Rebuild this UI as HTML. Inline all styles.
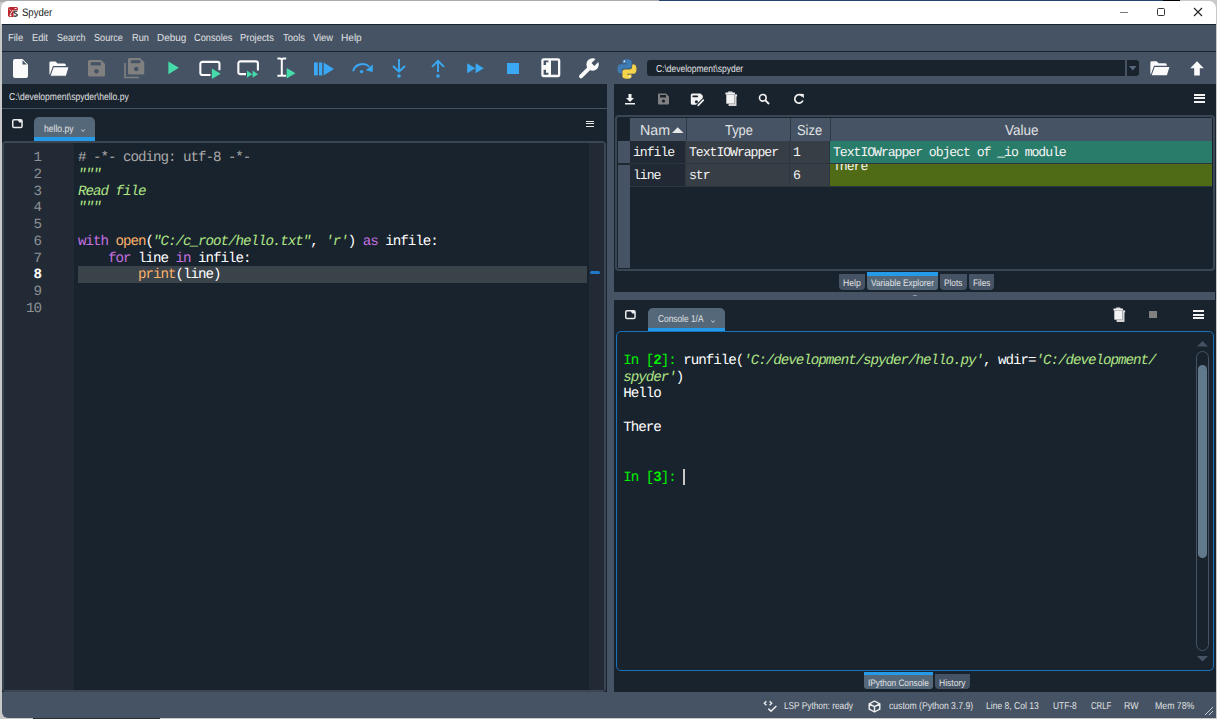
<!DOCTYPE html>
<html><head><meta charset="utf-8"><style>
html,body{margin:0;padding:0;}
body{width:1217px;height:719px;position:relative;overflow:hidden;background:#c9c9c9;font-family:"Liberation Sans",sans-serif;text-rendering:geometricPrecision;}
.a{position:absolute;}
.t{position:absolute;white-space:pre;}
svg{overflow:visible;}
</style></head><body>
<div class="a" style="left:0px;top:0px;width:1217px;height:719px;background:#c9c9c9;"></div>
<div class="a" style="left:0px;top:0px;width:659px;height:1.5px;background:#ababab;"></div>
<div class="a" style="left:659px;top:0px;width:504px;height:1.5px;background:#27446f;"></div>
<div class="a" style="left:1163px;top:0px;width:17px;height:1.5px;background:#000;"></div>
<div class="a" style="left:1px;top:1px;width:1215px;height:23px;background:#ffffff;border-radius:7px 7px 0 0;"></div>
<svg class="a" style="left:8.2px;top:6.6px;" width="10.2" height="10.2" viewBox="0 0 10.2 10.2"><rect x="0" y="0" width="10" height="10" rx="1.8" fill="#b8262c"/><path d="M5.6 3.2H10V10H5.6z" fill="#fff"/><path d="M2.2 7.5L4.8 3.2M1.4 2.5L2.8 3.6M6.5 1.6H8.6" stroke="#fff" stroke-width="0.9"/><circle cx="2.6" cy="8.4" r="0.9" fill="#fff"/><path d="M9.2 4.6C8.7 4 6 3.7 6 5.2C6 6.6 9.3 6.4 9.3 8.1C9.3 9.6 6.6 9.4 5.9 8.8" stroke="#333" stroke-width="1.3" fill="none"/></svg>
<div class="t" style="left:21.57px;top:8.0px;font-family:'Liberation Sans', sans-serif;font-size:10.9px;line-height:10.9px;color:#1a1a1a;transform:scaleX(0.8775);transform-origin:0 0;">Spyder</div>
<div class="a" style="left:1120px;top:11.5px;width:8px;height:1px;background:#7a7a7a;"></div>
<div class="a" style="left:1156.5px;top:8px;width:8px;height:8px;border:1px solid #333;border-radius:1.5px;box-sizing:border-box;"></div>
<svg class="a" style="left:1193px;top:7px;" width="10" height="10" viewBox="0 0 10 10"><path d="M1 1L9 9M9 1L1 9" stroke="#222" stroke-width="1.1"/></svg>
<div class="a" style="left:1.5px;top:24px;width:1214.2px;height:28px;background:#19232d;"></div>
<div class="a" style="left:1.5px;top:25px;width:1214.2px;height:25.5px;background:#455364;"></div>
<div class="t" style="left:8.35px;top:34.0px;font-family:'Liberation Sans', sans-serif;font-size:10.3px;line-height:10.3px;color:#e0e1e3;transform:scaleX(0.9153);transform-origin:0 0;">File</div>
<div class="t" style="left:31.76px;top:34.0px;font-family:'Liberation Sans', sans-serif;font-size:10.3px;line-height:10.3px;color:#e0e1e3;transform:scaleX(0.8966);transform-origin:0 0;">Edit</div>
<div class="t" style="left:57.09px;top:34.0px;font-family:'Liberation Sans', sans-serif;font-size:10.3px;line-height:10.3px;color:#e0e1e3;transform:scaleX(0.8771);transform-origin:0 0;">Search</div>
<div class="t" style="left:94.09px;top:34.0px;font-family:'Liberation Sans', sans-serif;font-size:10.3px;line-height:10.3px;color:#e0e1e3;transform:scaleX(0.8872);transform-origin:0 0;">Source</div>
<div class="t" style="left:131.66px;top:34.0px;font-family:'Liberation Sans', sans-serif;font-size:10.3px;line-height:10.3px;color:#e0e1e3;transform:scaleX(0.8962);transform-origin:0 0;">Run</div>
<div class="t" style="left:156.91px;top:34.0px;font-family:'Liberation Sans', sans-serif;font-size:10.3px;line-height:10.3px;color:#e0e1e3;transform:scaleX(0.9639);transform-origin:0 0;">Debug</div>
<div class="t" style="left:193.64px;top:34.0px;font-family:'Liberation Sans', sans-serif;font-size:10.3px;line-height:10.3px;color:#e0e1e3;transform:scaleX(0.8960);transform-origin:0 0;">Consoles</div>
<div class="t" style="left:240.15px;top:34.0px;font-family:'Liberation Sans', sans-serif;font-size:10.3px;line-height:10.3px;color:#e0e1e3;transform:scaleX(0.9111);transform-origin:0 0;">Projects</div>
<div class="t" style="left:282.81px;top:34.0px;font-family:'Liberation Sans', sans-serif;font-size:10.3px;line-height:10.3px;color:#e0e1e3;transform:scaleX(0.9113);transform-origin:0 0;">Tools</div>
<div class="t" style="left:312.95px;top:34.0px;font-family:'Liberation Sans', sans-serif;font-size:10.3px;line-height:10.3px;color:#e0e1e3;transform:scaleX(0.9052);transform-origin:0 0;">View</div>
<div class="t" style="left:341.09px;top:34.0px;font-family:'Liberation Sans', sans-serif;font-size:10.3px;line-height:10.3px;color:#e0e1e3;transform:scaleX(0.9784);transform-origin:0 0;">Help</div>
<div class="a" style="left:1.5px;top:52px;width:1214.2px;height:32px;background:#455364;"></div>
<div class="a" style="left:1.5px;top:84px;width:1214.2px;height:608px;background:#19232d;"></div>
<div class="a" style="left:1.5px;top:691.5px;width:1214.2px;height:26px;background:#455364;border-radius:0 0 0 6px;"></div>
<div class="a" style="left:33px;top:717.6px;width:127px;height:1.4px;background:#2a2f36;"></div>
<div class="t" style="left:9.07px;top:93.0px;font-family:'Liberation Sans', sans-serif;font-size:10.2px;line-height:10.2px;color:#e0e1e3;transform:scaleX(0.8385);transform-origin:0 0;">C:\development\spyder\hello.py</div>
<div class="a" style="left:2px;top:108px;width:605px;height:1px;background:#455364;"></div>
<svg class="a" style="left:11.9px;top:119px;" width="10.8" height="9.2" viewBox="0 0 10.8 9.2"><rect x="0.75" y="0.75" width="9.3" height="7.7" rx="1.3" stroke="#ececec" stroke-width="1.5" fill="none"/><path d="M5.8 0.9H10V3.4H7.1z" fill="#ececec"/></svg>
<div class="a" style="left:34px;top:117px;width:61px;height:20px;background:#54687a;border-radius:5px 5px 0 0;"></div>
<div class="a" style="left:34px;top:137px;width:61px;height:3.6px;background:#259ae9;"></div>
<div class="t" style="left:44.40px;top:125.0px;font-family:'Liberation Sans', sans-serif;font-size:10.2px;line-height:10.2px;color:#e0e1e3;transform:scaleX(0.8424);transform-origin:0 0;">hello.py</div>
<svg class="a" style="left:81.3px;top:128.8px;" width="4" height="3" viewBox="0 0 4 3"><path d="M0.4 0.4L2 2.5L3.6 0.4" stroke="#d0d3d6" stroke-width="0.9" fill="none"/></svg>
<div class="a" style="left:585.5px;top:120.5px;width:8.5px;height:1.4px;background:#e6e6e6;"></div>
<div class="a" style="left:585.5px;top:123.0px;width:8.5px;height:1.4px;background:#e6e6e6;"></div>
<div class="a" style="left:585.5px;top:125.5px;width:8.5px;height:1.4px;background:#e6e6e6;"></div>
<div class="a" style="left:2px;top:140.5px;width:603.5px;height:551px;border:2px solid #3b4654;border-radius:4px;box-sizing:border-box;background:#19232d;"></div>
<div class="a" style="left:4px;top:142.5px;width:70px;height:547px;background:#222b35;"></div>
<div class="a" style="left:588.5px;top:142.5px;width:15px;height:547px;background:#222b35;"></div>
<div class="a" style="left:78px;top:266px;width:508.7px;height:16.7px;background:#3a424a;"></div>
<div class="a" style="left:590.2px;top:270.7px;width:9.8px;height:3.1px;background:#1f78c8;border-radius:1.5px;"></div>
<div class="a" style="left:607px;top:84px;width:7px;height:608px;background:#455364;"></div>
<div class="t" style="left:78px;top:151.0px;font-family:'Liberation Mono', monospace;font-size:14.2px;line-height:14.2px;color:#ffffff;letter-spacing:-1.0199999999999996px;white-space:pre;"><span style="color:#a9a9a9;"># -*- coding: utf-8 -*-</span></div>
<div class="t" style="top:151.0px;right:1176px;text-align:right;font-family:'Liberation Mono', monospace;font-size:14.2px;line-height:14.2px;color:#8d9196;letter-spacing:-1.0199999999999996px;white-space:pre;">1</div>
<div class="t" style="left:78px;top:168.0px;font-family:'Liberation Mono', monospace;font-size:14.2px;line-height:14.2px;color:#ffffff;letter-spacing:-1.0199999999999996px;white-space:pre;"><span style="color:#b0e686;font-style:italic;">"""</span></div>
<div class="t" style="top:168.0px;right:1176px;text-align:right;font-family:'Liberation Mono', monospace;font-size:14.2px;line-height:14.2px;color:#8d9196;letter-spacing:-1.0199999999999996px;white-space:pre;">2</div>
<div class="t" style="left:78px;top:185.0px;font-family:'Liberation Mono', monospace;font-size:14.2px;line-height:14.2px;color:#ffffff;letter-spacing:-1.0199999999999996px;white-space:pre;"><span style="color:#b0e686;font-style:italic;">Read file</span></div>
<div class="t" style="top:185.0px;right:1176px;text-align:right;font-family:'Liberation Mono', monospace;font-size:14.2px;line-height:14.2px;color:#8d9196;letter-spacing:-1.0199999999999996px;white-space:pre;">3</div>
<div class="t" style="left:78px;top:201.0px;font-family:'Liberation Mono', monospace;font-size:14.2px;line-height:14.2px;color:#ffffff;letter-spacing:-1.0199999999999996px;white-space:pre;"><span style="color:#b0e686;font-style:italic;">"""</span></div>
<div class="t" style="top:201.0px;right:1176px;text-align:right;font-family:'Liberation Mono', monospace;font-size:14.2px;line-height:14.2px;color:#8d9196;letter-spacing:-1.0199999999999996px;white-space:pre;">4</div>
<div class="t" style="top:218.0px;right:1176px;text-align:right;font-family:'Liberation Mono', monospace;font-size:14.2px;line-height:14.2px;color:#8d9196;letter-spacing:-1.0199999999999996px;white-space:pre;">5</div>
<div class="t" style="left:78px;top:235.0px;font-family:'Liberation Mono', monospace;font-size:14.2px;line-height:14.2px;color:#ffffff;letter-spacing:-1.0199999999999996px;white-space:pre;"><span style="color:#c670e0;">with</span><span style="color:#ffffff;"> </span><span style="color:#fab16c;">open</span><span style="color:#ffffff;">(</span><span style="color:#b0e686;font-style:italic;">"C:/c_root/hello.txt"</span><span style="color:#ffffff;">, </span><span style="color:#b0e686;font-style:italic;">'r'</span><span style="color:#ffffff;">) </span><span style="color:#c670e0;">as</span><span style="color:#ffffff;"> infile:</span></div>
<div class="t" style="top:235.0px;right:1176px;text-align:right;font-family:'Liberation Mono', monospace;font-size:14.2px;line-height:14.2px;color:#8d9196;letter-spacing:-1.0199999999999996px;white-space:pre;">6</div>
<div class="t" style="left:78px;top:252.0px;font-family:'Liberation Mono', monospace;font-size:14.2px;line-height:14.2px;color:#ffffff;letter-spacing:-1.0199999999999996px;white-space:pre;"><span style="color:#ffffff;">    </span><span style="color:#c670e0;">for</span><span style="color:#ffffff;"> line </span><span style="color:#c670e0;">in</span><span style="color:#ffffff;"> infile:</span></div>
<div class="t" style="top:252.0px;right:1176px;text-align:right;font-family:'Liberation Mono', monospace;font-size:14.2px;line-height:14.2px;color:#8d9196;letter-spacing:-1.0199999999999996px;white-space:pre;">7</div>
<div class="t" style="left:78px;top:268.0px;font-family:'Liberation Mono', monospace;font-size:14.2px;line-height:14.2px;color:#ffffff;letter-spacing:-1.0199999999999996px;white-space:pre;"><span style="color:#ffffff;">        </span><span style="color:#fab16c;">print</span><span style="color:#ffffff;">(line)</span></div>
<div class="t" style="top:268.0px;right:1176px;text-align:right;font-family:'Liberation Mono', monospace;font-size:14.2px;line-height:14.2px;color:#ffffff;letter-spacing:-1.0199999999999996px;white-space:pre;"><b>8</b></div>
<div class="t" style="top:285.0px;right:1176px;text-align:right;font-family:'Liberation Mono', monospace;font-size:14.2px;line-height:14.2px;color:#8d9196;letter-spacing:-1.0199999999999996px;white-space:pre;">9</div>
<div class="t" style="top:302.0px;right:1176px;text-align:right;font-family:'Liberation Mono', monospace;font-size:14.2px;line-height:14.2px;color:#8d9196;letter-spacing:-1.0199999999999996px;white-space:pre;">10</div>
<svg class="a" style="left:624px;top:93px;" width="12" height="12" viewBox="0 0 12 12"><path d="M4.5 1h3v4h2.5L6 9L2 5h2.5z" fill="#f2f2f2"/><rect x="1" y="10" width="10" height="1.5" fill="#f2f2f2"/></svg>
<svg class="a" style="left:657px;top:93px;" width="13" height="12" viewBox="0 0 13 12"><path d="M1 1.5a1 1 0 0 1 1-1h7l3 3v7a1 1 0 0 1-1 1H2a1 1 0 0 1-1-1z" fill="#808080"/><rect x="3" y="2" width="6" height="2.5" fill="#19232d"/><circle cx="6.5" cy="8" r="1.6" fill="#19232d"/></svg>
<svg class="a" style="left:690px;top:92.5px;" width="14" height="13" viewBox="0 0 14 13"><path d="M2.3 0.5H10.5L12.8 2.8V5L6 11.8H2.3A1.5 1.5 0 0 1 0.8 10.3V2A1.5 1.5 0 0 1 2.3 0.5z" fill="#f2f2f2"/><rect x="2.4" y="2.4" width="5.6" height="1.8" rx="0.6" fill="#19232d"/><circle cx="6.4" cy="8.8" r="1.5" fill="#19232d"/><path d="M8.2 12.3L13.3 7.2" stroke="#f2f2f2" stroke-width="1.7" stroke-linecap="round"/></svg>
<svg class="a" style="left:724.5px;top:90.5px;" width="13" height="16" viewBox="0 0 13 16"><rect x="3" y="0.4" width="4.5" height="1.3" rx="0.5" fill="#f2f2f2"/><rect x="0.4" y="1.6" width="9.6" height="1.9" rx="0.5" fill="#f2f2f2"/><rect x="1.3" y="3.5" width="8.1" height="9.2" fill="#f2f2f2"/><path d="M9.4 3.5H11.5V15.1H3.6V12.7H9.4z" fill="#d4d4d4"/><rect x="10.2" y="3.5" width="1.9" height="1.9" fill="#e0e0e0"/></svg>
<svg class="a" style="left:758px;top:93px;" width="12" height="12" viewBox="0 0 12 12"><circle cx="4.8" cy="4.8" r="3.3" stroke="#f2f2f2" stroke-width="1.6" fill="none"/><path d="M7.2 7.2L11 11" stroke="#f2f2f2" stroke-width="1.9"/></svg>
<svg class="a" style="left:793px;top:93px;" width="12" height="12" viewBox="0 0 12 12"><path d="M9.3 3.3A4.2 4.2 0 1 0 9.9 7.5" stroke="#f2f2f2" stroke-width="1.7" fill="none"/><path d="M6.5 0.8L10.8 1v4.3z" fill="#f2f2f2"/></svg>
<div class="a" style="left:1193.5px;top:94.0px;width:11.5px;height:2px;background:#f2f2f2;"></div>
<div class="a" style="left:1193.5px;top:97.3px;width:11.5px;height:2px;background:#f2f2f2;"></div>
<div class="a" style="left:1193.5px;top:100.6px;width:11.5px;height:2px;background:#f2f2f2;"></div>
<div class="a" style="left:615px;top:114.5px;width:600px;height:156.5px;border:2px solid #3b4654;border-radius:4px;box-sizing:border-box;"></div>
<div class="a" style="left:618px;top:140.5px;width:12px;height:127.5px;background:#455364;"></div>
<div class="a" style="left:618px;top:163.3px;width:12px;height:1.6px;background:#1e2832;"></div>
<div class="a" style="left:630px;top:117.5px;width:582px;height:23px;background:#455364;"></div>
<div class="a" style="left:685.5px;top:117.5px;width:1.3px;height:23px;background:#2d3845;"></div>
<div class="a" style="left:789.5px;top:117.5px;width:1.3px;height:23px;background:#2d3845;"></div>
<div class="a" style="left:829.5px;top:117.5px;width:1.3px;height:23px;background:#2d3845;"></div>
<div class="a" style="left:630px;top:140.5px;width:582px;height:46px;background:#2c3640;"></div>
<div class="a" style="left:630px;top:140.5px;width:54.5px;height:22px;background:#212a34;"></div>
<div class="a" style="left:685.5px;top:140.5px;width:103.5px;height:22px;background:#383e45;"></div>
<div class="a" style="left:790px;top:140.5px;width:39px;height:22px;background:#383e45;"></div>
<div class="a" style="left:630px;top:163.5px;width:54.5px;height:22px;background:#212a34;"></div>
<div class="a" style="left:685.5px;top:163.5px;width:103.5px;height:22px;background:#383e45;"></div>
<div class="a" style="left:790px;top:163.5px;width:39px;height:22px;background:#383e45;"></div>
<div class="a" style="left:830px;top:140.5px;width:382px;height:22px;background:#2a7c6a;"></div>
<div class="a" style="left:830px;top:163.5px;width:382px;height:22px;background:#506b16;"></div>
<div class="t" style="left:639.66px;top:124.0px;font-family:'Liberation Sans', sans-serif;font-size:14.4px;line-height:14.4px;color:#e0e1e3;transform:scaleX(0.9906);transform-origin:0 0;">Nam</div>
<svg class="a" style="left:671.5px;top:126.5px;" width="11.5" height="6.3" viewBox="0 0 11.5 6.3"><path d="M0 6L5.75 0.2L11.5 6z" fill="#e6e8ea"/></svg>
<div class="t" style="left:724.74px;top:124.0px;font-family:'Liberation Sans', sans-serif;font-size:14.4px;line-height:14.4px;color:#e0e1e3;transform:scaleX(0.8929);transform-origin:0 0;">Type</div>
<div class="t" style="left:797.42px;top:124.0px;font-family:'Liberation Sans', sans-serif;font-size:14.4px;line-height:14.4px;color:#e0e1e3;transform:scaleX(0.8985);transform-origin:0 0;">Size</div>
<div class="t" style="left:1004.73px;top:124.0px;font-family:'Liberation Sans', sans-serif;font-size:14.4px;line-height:14.4px;color:#e0e1e3;transform:scaleX(0.9374);transform-origin:0 0;">Value</div>
<div class="t" style="left:633px;top:146.0px;font-family:'Liberation Mono', monospace;font-size:13.2px;line-height:13.2px;color:#f4f4f4;letter-spacing:-1.0699999999999994px;">infile</div>
<div class="t" style="left:689px;top:146.0px;font-family:'Liberation Mono', monospace;font-size:13.2px;line-height:13.2px;color:#f4f4f4;letter-spacing:-1.0699999999999994px;">TextIOWrapper</div>
<div class="t" style="left:793px;top:146.0px;font-family:'Liberation Mono', monospace;font-size:13.2px;line-height:13.2px;color:#f4f4f4;letter-spacing:-1.0699999999999994px;">1</div>
<div class="t" style="left:833px;top:146.0px;font-family:'Liberation Mono', monospace;font-size:13.2px;line-height:13.2px;color:#f4f4f4;letter-spacing:-1.0699999999999994px;">TextIOWrapper object of _io module</div>
<div class="t" style="left:633px;top:169.0px;font-family:'Liberation Mono', monospace;font-size:13.2px;line-height:13.2px;color:#f4f4f4;letter-spacing:-1.0699999999999994px;">line</div>
<div class="t" style="left:689px;top:169.0px;font-family:'Liberation Mono', monospace;font-size:13.2px;line-height:13.2px;color:#f4f4f4;letter-spacing:-1.0699999999999994px;">str</div>
<div class="t" style="left:793px;top:169.0px;font-family:'Liberation Mono', monospace;font-size:13.2px;line-height:13.2px;color:#f4f4f4;letter-spacing:-1.0699999999999994px;">6</div>
<div class="a" style="left:830px;top:163.5px;width:100px;height:8.5px;overflow:hidden;"><div style="position:absolute;left:3px;top:-3.5px;font-family:'Liberation Mono', monospace;font-size:13.2px;line-height:13.2px;letter-spacing:-1.0699999999999994px;color:#f4f4f4;white-space:pre;">There</div></div>
<div class="a" style="left:839.3px;top:274px;width:25.7px;height:15.699999999999989px;background:#455364;border-radius:0 0 4px 4px;"></div>
<div class="t" style="left:843.21px;top:278.0px;font-family:'Liberation Sans', sans-serif;font-size:9.4px;line-height:9.4px;color:#e0e1e3;transform:scaleX(0.9181);transform-origin:0 0;">Help</div>
<div class="a" style="left:866.7px;top:272px;width:71.3px;height:3.6px;background:#259ae9;"></div>
<div class="a" style="left:866.7px;top:275.6px;width:71.3px;height:14.099999999999989px;background:#54687a;border-radius:0 0 3px 3px;"></div>
<div class="t" style="left:870.86px;top:278.0px;font-family:'Liberation Sans', sans-serif;font-size:9.4px;line-height:9.4px;color:#e0e1e3;transform:scaleX(0.8834);transform-origin:0 0;">Variable Explorer</div>
<div class="a" style="left:940.4px;top:274px;width:26.3px;height:15.699999999999989px;background:#455364;border-radius:0 0 4px 4px;"></div>
<div class="t" style="left:944.14px;top:278.0px;font-family:'Liberation Sans', sans-serif;font-size:9.4px;line-height:9.4px;color:#e0e1e3;transform:scaleX(0.8823);transform-origin:0 0;">Plots</div>
<div class="a" style="left:968.9px;top:274px;width:25px;height:15.699999999999989px;background:#455364;border-radius:0 0 4px 4px;"></div>
<div class="t" style="left:972.84px;top:278.0px;font-family:'Liberation Sans', sans-serif;font-size:9.4px;line-height:9.4px;color:#e0e1e3;transform:scaleX(0.8799);transform-origin:0 0;">Files</div>
<div class="a" style="left:614px;top:292px;width:601px;height:7.5px;background:#455364;"></div>
<div class="a" style="left:913px;top:295px;width:4px;height:1px;background:#8a96a3;"></div>
<svg class="a" style="left:625.4px;top:309.7px;" width="10.8" height="9.3" viewBox="0 0 10.8 9.3"><rect x="0.75" y="0.75" width="9.3" height="7.8" rx="1.3" stroke="#ececec" stroke-width="1.5" fill="none"/><path d="M5.8 0.9H10V3.4H7.1z" fill="#ececec"/></svg>
<div class="a" style="left:647.6px;top:308px;width:77px;height:20px;background:#54687a;border-radius:5px 5px 0 0;"></div>
<div class="a" style="left:647.6px;top:328px;width:77px;height:3.4px;background:#259ae9;"></div>
<div class="t" style="left:658.28px;top:315.0px;font-family:'Liberation Sans', sans-serif;font-size:10px;line-height:10px;color:#e0e1e3;transform:scaleX(0.8341);transform-origin:0 0;">Console 1/A</div>
<svg class="a" style="left:711.2px;top:319.8px;" width="4" height="3" viewBox="0 0 4 3"><path d="M0.4 0.4L2 2.5L3.6 0.4" stroke="#d0d3d6" stroke-width="0.9" fill="none"/></svg>
<svg class="a" style="left:1113px;top:307px;" width="13" height="16" viewBox="0 0 13 16"><rect x="3" y="0.4" width="4.5" height="1.3" rx="0.5" fill="#f2f2f2"/><rect x="0.4" y="1.6" width="9.6" height="1.9" rx="0.5" fill="#f2f2f2"/><rect x="1.3" y="3.5" width="8.1" height="9.2" fill="#f2f2f2"/><path d="M9.4 3.5H11.5V15.1H3.6V12.7H9.4z" fill="#d4d4d4"/><rect x="10.2" y="3.5" width="1.9" height="1.9" fill="#e0e0e0"/></svg>
<div class="a" style="left:1149px;top:310.6px;width:7.8px;height:7.8px;background:#808080;"></div>
<div class="a" style="left:1192.5px;top:310.3px;width:11.5px;height:2px;background:#f2f2f2;"></div>
<div class="a" style="left:1192.5px;top:313.6px;width:11.5px;height:2px;background:#f2f2f2;"></div>
<div class="a" style="left:1192.5px;top:316.90000000000003px;width:11.5px;height:2px;background:#f2f2f2;"></div>
<div class="a" style="left:616px;top:331.3px;width:598px;height:340px;border:1.5px solid #1a72bb;border-radius:5px;box-sizing:border-box;"></div>
<svg class="a" style="left:1197px;top:341px;" width="11" height="6" viewBox="0 0 11 6"><path d="M0 5.6L5.5 0L11 5.6z" fill="#455364"/></svg>
<div class="a" style="left:1195.8px;top:351px;width:13.4px;height:299.5px;border:1.6px solid #455364;border-radius:6.5px;box-sizing:border-box;"></div>
<div class="a" style="left:1197.9px;top:364.8px;width:9.2px;height:193px;background:#60798b;border-radius:4.6px;"></div>
<svg class="a" style="left:1197px;top:655.5px;" width="11" height="6" viewBox="0 0 11 6"><path d="M0 0L5.5 5.4L11 0z" fill="#455364"/></svg>
<div class="t" style="left:623.3px;top:354.0px;font-family:'Liberation Mono', monospace;font-size:14.2px;line-height:14.2px;color:#ffffff;letter-spacing:-1.0199999999999996px;white-space:pre;"><span style="color:#00f000;">In [</span><span style="color:#00f000;font-weight:bold;">2</span><span style="color:#00f000;">]: </span><span style="color:#ffffff;">runfile(</span><span style="color:#b0e686;font-style:italic;">'C:/development/spyder/hello.py'</span><span style="color:#ffffff;">, wdir=</span><span style="color:#b0e686;font-style:italic;">'C:/development/</span></div>
<div class="t" style="left:623.3px;top:371.0px;font-family:'Liberation Mono', monospace;font-size:14.2px;line-height:14.2px;color:#ffffff;letter-spacing:-1.0199999999999996px;white-space:pre;"><span style="color:#b0e686;font-style:italic;">spyder'</span><span style="color:#ffffff;">)</span></div>
<div class="t" style="left:623.3px;top:387.0px;font-family:'Liberation Mono', monospace;font-size:14.2px;line-height:14.2px;color:#ffffff;letter-spacing:-1.0199999999999996px;white-space:pre;">Hello</div>
<div class="t" style="left:623.3px;top:421.0px;font-family:'Liberation Mono', monospace;font-size:14.2px;line-height:14.2px;color:#ffffff;letter-spacing:-1.0199999999999996px;white-space:pre;">There</div>
<div class="t" style="left:623.3px;top:471.0px;font-family:'Liberation Mono', monospace;font-size:14.2px;line-height:14.2px;color:#ffffff;letter-spacing:-1.0199999999999996px;white-space:pre;"><span style="color:#00f000;">In [</span><span style="color:#00f000;font-weight:bold;">3</span><span style="color:#00f000;">]: </span></div>
<div class="a" style="left:683.2px;top:469px;width:1.5px;height:15.5px;background:#c8c8c8;"></div>
<div class="a" style="left:863.6px;top:672px;width:69.3px;height:3.2px;background:#259ae9;"></div>
<div class="a" style="left:863.6px;top:675.2px;width:69.3px;height:14.099999999999955px;background:#54687a;border-radius:0 0 3px 3px;"></div>
<div class="t" style="left:867.65px;top:678.0px;font-family:'Liberation Sans', sans-serif;font-size:9.4px;line-height:9.4px;color:#e0e1e3;transform:scaleX(0.8836);transform-origin:0 0;">IPython Console</div>
<div class="a" style="left:935px;top:674px;width:35px;height:15.299999999999955px;background:#455364;border-radius:0 0 4px 4px;"></div>
<div class="t" style="left:938.82px;top:678.0px;font-family:'Liberation Sans', sans-serif;font-size:9.4px;line-height:9.4px;color:#e0e1e3;transform:scaleX(0.9093);transform-origin:0 0;">History</div>
<svg class="a" style="left:763px;top:700px;" width="14" height="13" viewBox="0 0 14 13"><path d="M3.4 1.2L1.3 3.2L3.4 5.2M6.6 1.2L8.7 3.2L6.6 5.2" stroke="#f2f2f2" stroke-width="1.3" fill="none"/><path d="M5.4 8.6L8 11.2L13.4 6" stroke="#f2f2f2" stroke-width="1.5" fill="none"/></svg>
<div class="t" style="left:783.84px;top:702.0px;font-family:'Liberation Sans', sans-serif;font-size:10px;line-height:10px;color:#e0e1e3;transform:scaleX(0.8277);transform-origin:0 0;">LSP Python: ready</div>
<svg class="a" style="left:867.5px;top:699.5px;" width="13" height="12.5" viewBox="0 0 13 12.5"><path d="M6.5 1L11.8 3.8V9.2L6.5 12L1.2 9.2V3.8z M1.2 3.8L6.5 6.6L11.8 3.8 M6.5 6.6V12" stroke="#f2f2f2" stroke-width="1.4" fill="none" stroke-linejoin="round"/></svg>
<div class="t" style="left:888.66px;top:702.0px;font-family:'Liberation Sans', sans-serif;font-size:10px;line-height:10px;color:#e0e1e3;transform:scaleX(0.8595);transform-origin:0 0;">custom (Python 3.7.9)</div>
<div class="t" style="left:986.32px;top:702.0px;font-family:'Liberation Sans', sans-serif;font-size:10px;line-height:10px;color:#e0e1e3;transform:scaleX(0.8562);transform-origin:0 0;">Line 8, Col 13</div>
<div class="t" style="left:1053.07px;top:702.0px;font-family:'Liberation Sans', sans-serif;font-size:10px;line-height:10px;color:#e0e1e3;transform:scaleX(0.8398);transform-origin:0 0;">UTF-8</div>
<div class="t" style="left:1090.61px;top:702.0px;font-family:'Liberation Sans', sans-serif;font-size:10px;line-height:10px;color:#e0e1e3;transform:scaleX(0.7778);transform-origin:0 0;">CRLF</div>
<div class="t" style="left:1123.60px;top:702.0px;font-family:'Liberation Sans', sans-serif;font-size:10px;line-height:10px;color:#e0e1e3;transform:scaleX(0.8754);transform-origin:0 0;">RW</div>
<div class="t" style="left:1155.00px;top:702.0px;font-family:'Liberation Sans', sans-serif;font-size:10px;line-height:10px;color:#e0e1e3;transform:scaleX(0.8734);transform-origin:0 0;">Mem 78%</div>
<svg class="a" style="left:1202px;top:704px;" width="12" height="12" viewBox="0 0 12 12"><path d="M11 3L3 11M11 7L7 11" stroke="#c8ccd0" stroke-width="1"/></svg>
<svg class="a" style="left:13px;top:59px;" width="15" height="19" viewBox="0 0 15 19"><path d="M2 0H9.5L15 5.5V17A2 2 0 0 1 13 19H2A2 2 0 0 1 0 17V2A2 2 0 0 1 2 0z" fill="#fafafa"/><path d="M9.5 1.2V5.5H13.8z" fill="#455364"/></svg>
<svg class="a" style="left:48.5px;top:60.5px;" width="20.5" height="16" viewBox="0 0 20.5 16"><path d="M1.8 0.4H6.6L8.6 2.4H15.3A1.5 1.5 0 0 1 16.8 3.9V14.2H1.8A1.4 1.4 0 0 1 0.4 12.8V1.8A1.4 1.4 0 0 1 1.8 0.4z" fill="#fafafa"/><path d="M4.3 5.6H20.2L17.3 15.3H0.9z" fill="#fafafa" stroke="#455364" stroke-width="1.1" stroke-linejoin="round"/></svg>
<svg class="a" style="left:87.5px;top:60.3px;" width="17" height="16.5" viewBox="0 0 17 16.5"><path d="M1.5 0H13L17 4V15A1.5 1.5 0 0 1 15.5 16.5H1.5A1.5 1.5 0 0 1 0 15V1.5A1.5 1.5 0 0 1 1.5 0z" fill="#808080"/><rect x="2.8" y="2.2" width="10" height="3.2" fill="#455364"/><circle cx="8.5" cy="11.2" r="2.3" fill="#455364"/></svg>
<svg class="a" style="left:124px;top:58px;" width="21" height="21" viewBox="0 0 21 21"><path d="M5.5 0H16L20.3 4.3V15A1.5 1.5 0 0 1 18.8 16.5H5.5A1.5 1.5 0 0 1 4 15V1.5A1.5 1.5 0 0 1 5.5 0z" fill="#808080"/><rect x="6.8" y="2.2" width="9.5" height="3" fill="#455364"/><circle cx="12.3" cy="11" r="2.3" fill="#455364"/><path d="M1 5V19.5H15" stroke="#808080" stroke-width="1.6" fill="none"/></svg>
<svg class="a" style="left:167.5px;top:61.3px;" width="11.5" height="14" viewBox="0 0 11.5 14"><path d="M0.4 0.4L10.9 6.7L0.4 13.2z" fill="#46dbab"/></svg>
<svg class="a" style="left:198.5px;top:60.5px;" width="23" height="19" viewBox="0 0 23 19"><rect x="1.35" y="0.85" width="19.1" height="13.2" rx="2" stroke="#fafafa" stroke-width="2.1" fill="none"/><rect x="11.5" y="9.2" width="12" height="12" fill="#455364"/><path d="M12.9 7.6L21.7 12.8L12.9 18z" fill="#46dbab"/></svg>
<svg class="a" style="left:237px;top:59.5px;" width="22" height="19" viewBox="0 0 22 19"><rect x="1.35" y="1.35" width="19.55" height="12.8" rx="2" stroke="#fafafa" stroke-width="2.1" fill="none"/><rect x="9" y="10.5" width="13" height="10" fill="#455364"/><path d="M10 10.6L15.3 14.2L10 17.8z M15.6 10.6L20.9 14.2L15.6 17.8z" fill="#46dbab"/></svg>
<svg class="a" style="left:276.5px;top:57px;" width="19.5" height="22" viewBox="0 0 19.5 22"><path d="M0.4 1.6H2.9C4.2 1.6 4.8 2.3 4.8 3.5V16.9C4.8 18.1 4.2 18.8 2.9 18.8H0.4 M9.2 1.6H6.7C5.4 1.6 4.8 2.3 4.8 3.5V16.9C4.8 18.1 5.4 18.8 6.7 18.8H9.2" stroke="#fafafa" stroke-width="2" fill="none"/><path d="M9.7 11L18.5 16.3L9.7 21.5z" fill="#46dbab"/></svg>
<svg class="a" style="left:313.5px;top:61.5px;" width="20.5" height="14" viewBox="0 0 20.5 14"><rect x="0" y="0.4" width="3.8" height="13" fill="#3aa8f2"/><rect x="5" y="0.4" width="3.2" height="13" fill="#3aa8f2"/><path d="M9.6 0.4L20 6.9L9.6 13.4z" fill="#3aa8f2"/></svg>
<svg class="a" style="left:351.5px;top:62px;" width="21.5" height="12.5" viewBox="0 0 21.5 12.5"><path d="M1.1 9.2A9.6 8.6 0 0 1 17.3 4.6" stroke="#3aa8f2" stroke-width="1.9" fill="none"/><path d="M20.9 2.6L20.7 9.9L13.8 8.3z" fill="#3aa8f2"/><circle cx="9.6" cy="9.6" r="1.7" fill="#3aa8f2"/></svg>
<svg class="a" style="left:167.5px;top:61.5px;" width="0" height="0" viewBox="0 0 0 0"></svg>
<svg class="a" style="left:392px;top:58.5px;" width="14" height="19" viewBox="0 0 14 19"><path d="M7 0V12.5" stroke="#3aa8f2" stroke-width="1.9"/><path d="M1 7L7 12.8L13 7" stroke="#3aa8f2" stroke-width="1.9" fill="none"/><circle cx="7" cy="17" r="1.8" fill="#3aa8f2"/></svg>
<svg class="a" style="left:430.5px;top:58.5px;" width="14" height="19" viewBox="0 0 14 19"><path d="M7 2V13" stroke="#3aa8f2" stroke-width="1.9"/><path d="M1 7.8L7 1.8L13 7.8" stroke="#3aa8f2" stroke-width="1.9" fill="none"/><circle cx="7" cy="17" r="1.8" fill="#3aa8f2"/></svg>
<svg class="a" style="left:467px;top:63px;" width="17.5" height="11" viewBox="0 0 17.5 11"><path d="M0.2 0.2L8.4 5.2L0.2 10.3z M8.6 0.2L16.8 5.2L8.6 10.3z" fill="#3aa8f2"/></svg>
<div class="a" style="left:507.3px;top:62.9px;width:11.4px;height:11px;background:#3aa8f2;"></div>
<svg class="a" style="left:541px;top:58.3px;" width="19.5" height="19.3" viewBox="0 0 19.5 19.3"><rect x="0.3" y="0.2" width="19" height="19" rx="2.3" fill="#fafafa"/><rect x="10" y="2.6" width="7" height="14.1" fill="#455364"/><path d="M2.6 2.6h4.8v1.7H5v2.8H2.6z M2.6 11.7H5v3.1h2.4v1.9H2.6z" fill="#455364"/></svg>
<svg class="a" style="left:578px;top:57.5px;" width="21" height="21" viewBox="0 0 21 21"><path d="M3 18.4L10.8 10.6" stroke="#fafafa" stroke-width="3.9" stroke-linecap="round"/><circle cx="14.6" cy="6.5" r="6.2" fill="#fafafa"/><path d="M13.5 5.1L16.3 7.9L23 1.2L20.2 -1.6z" fill="#455364"/></svg>
<svg class="a" style="left:616.5px;top:59px;" width="20" height="20" viewBox="0 0 20 20"><path d="M9.8 0.3C5.2 0.3 5.5 2.3 5.5 2.3V4.5H10V5.2H3.6C3.6 5.2 0.5 4.8 0.5 9.8C0.5 14.7 3.2 14.5 3.2 14.5H4.8V12.2C4.8 12.2 4.7 9.5 7.500 9.5H12C12 9.5 14.6 9.5 14.6 7V2.8C14.6 2.8 15 0.3 9.8 0.3z" fill="#3f7cb6"/><circle cx="7.3" cy="2.4" r="0.8" fill="#fff"/><path d="M10.2 19.7C14.8 19.7 14.5 17.7 14.5 17.7V15.5H10V14.8H16.4C16.4 14.8 19.5 15.2 19.5 10.2C19.5 5.3 16.8 5.5 16.8 5.5H15.2V7.8C15.2 7.8 15.3 10.5 12.5 10.5H8C8 10.5 5.4 10.5 5.4 13V17.2C5.4 17.2 5 19.7 10.2 19.7z" fill="#f5d34a"/><circle cx="12.7" cy="17.6" r="0.8" fill="#fff"/></svg>
<div class="a" style="left:647px;top:59.7px;width:492px;height:16.3px;background:#19232d;border-radius:3px;"></div>
<div class="a" style="left:1125.2px;top:59.7px;width:1.5px;height:16.3px;background:#455364;"></div>
<svg class="a" style="left:1129.3px;top:65.8px;" width="7.6" height="4.6" viewBox="0 0 7.6 4.6"><path d="M0 0H7.6L3.8 4.6z" fill="#56697c"/></svg>
<div class="t" style="left:656.38px;top:65.0px;font-family:'Liberation Sans', sans-serif;font-size:10.2px;line-height:10.2px;color:#e0e1e3;transform:scaleX(0.8321);transform-origin:0 0;">C:\development\spyder</div>
<svg class="a" style="left:1150px;top:60.5px;" width="20.5" height="15.5" viewBox="0 0 20.5 15.5"><path d="M1.8 0.3H6.6L8.6 2.3H15.3A1.5 1.5 0 0 1 16.8 3.8V13.8H1.8A1.4 1.4 0 0 1 0.4 12.4V1.7A1.4 1.4 0 0 1 1.8 0.3z" fill="#fafafa"/><path d="M4.3 5.4H20.2L17.3 14.9H0.9z" fill="#fafafa" stroke="#455364" stroke-width="1.1" stroke-linejoin="round"/></svg>
<svg class="a" style="left:1190px;top:61px;" width="14" height="15" viewBox="0 0 14 15"><path d="M7 0.3L13.8 7.3H9.8V14.5H4.2V7.3H0.2z" fill="#fafafa"/></svg>
</body></html>
